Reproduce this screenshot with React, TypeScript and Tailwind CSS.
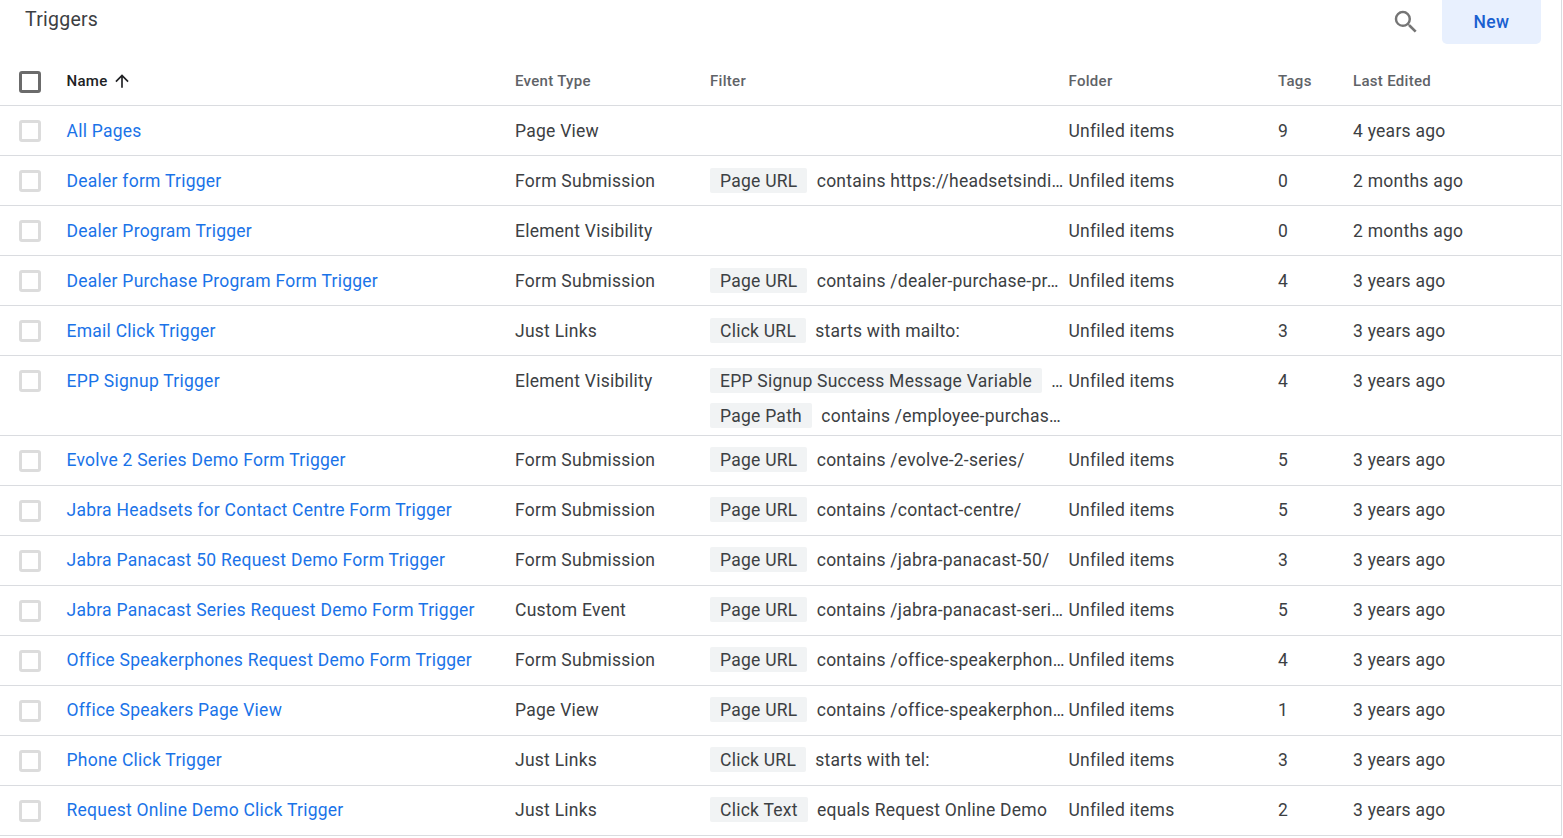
const rows = [
  { name: "All Pages", type: "Page View", filters: [], tags: "9", edited: "4 years ago" },
  { name: "Dealer form Trigger", type: "Form Submission", filters: [["Page URL", "contains https://headsetsindi…"]], tags: "0", edited: "2 months ago" },
  { name: "Dealer Program Trigger", type: "Element Visibility", filters: [], tags: "0", edited: "2 months ago" },
  { name: "Dealer Purchase Program Form Trigger", type: "Form Submission", filters: [["Page URL", "contains /dealer-purchase-pr…"]], tags: "4", edited: "3 years ago" },
  { name: "Email Click Trigger", type: "Just Links", filters: [["Click URL", "starts with mailto:"]], tags: "3", edited: "3 years ago" },
  { name: "EPP Signup Trigger", type: "Element Visibility", filters: [["EPP Signup Success Message Variable", "…"], ["Page Path", "contains /employee-purchas…"]], tags: "4", edited: "3 years ago" },
  { name: "Evolve 2 Series Demo Form Trigger", type: "Form Submission", filters: [["Page URL", "contains /evolve-2-series/"]], tags: "5", edited: "3 years ago" },
  { name: "Jabra Headsets for Contact Centre Form Trigger", type: "Form Submission", filters: [["Page URL", "contains /contact-centre/"]], tags: "5", edited: "3 years ago" },
  { name: "Jabra Panacast 50 Request Demo Form Trigger", type: "Form Submission", filters: [["Page URL", "contains /jabra-panacast-50/"]], tags: "3", edited: "3 years ago" },
  { name: "Jabra Panacast Series Request Demo Form Trigger", type: "Custom Event", filters: [["Page URL", "contains /jabra-panacast-seri…"]], tags: "5", edited: "3 years ago" },
  { name: "Office Speakerphones Request Demo Form Trigger", type: "Form Submission", filters: [["Page URL", "contains /office-speakerphon…"]], tags: "4", edited: "3 years ago" },
  { name: "Office Speakers Page View", type: "Page View", filters: [["Page URL", "contains /office-speakerphon…"]], tags: "1", edited: "3 years ago" },
  { name: "Phone Click Trigger", type: "Just Links", filters: [["Click URL", "starts with tel:"]], tags: "3", edited: "3 years ago" },
  { name: "Request Online Demo Click Trigger", type: "Just Links", filters: [["Click Text", "equals Request Online Demo"]], tags: "2", edited: "3 years ago" },
];

export default function App() {
  return (
    <div className="w-[1563px] h-[838px] overflow-hidden bg-white font-['Roboto',sans-serif] text-[17.5px] tracking-[0.25px] text-[#3c4043]">
      <div className="w-[1562px] border-r border-[#dadce0]">
        <div className="h-[44px] flex items-start justify-between pl-[25px] pr-[20px]">
          <h1 className="text-[19.5px] leading-[40px] text-[#3c4043]">Triggers</h1>
          <div className="flex items-center">
            <svg className="w-[30px] h-[30px] mr-[21px] mt-[-1px] text-[#757575]" viewBox="0 0 24 24" fill="currentColor">
              <path d="M15.5 14h-.79l-.28-.27A6.47 6.47 0 0 0 16 9.5 6.5 6.5 0 1 0 9.5 16c1.61 0 3.09-.59 4.23-1.57l.27.28v.79l5 4.99L20.49 19l-4.99-5zm-6 0C7.01 14 5 11.99 5 9.5S7.01 5 9.5 5 14 7.01 14 9.5 11.99 14 9.5 14z" />
            </svg>
            <button className="w-[99px] h-[44px] rounded-b-[5px] bg-[#e8f0fe] text-[#1a5fd0] text-[17.5px] tracking-[0.45px] font-medium">New</button>
          </div>
        </div>
        <div className="h-[62px] pt-[14px] flex items-center border-b border-[#dadce0] text-[15px] font-medium text-[#5f6368] tracking-[0.3px]">
          <div className="w-[66.5px] pl-[19px] shrink-0">
            <div className="w-[22px] h-[22px] rounded-[3px] border-[3px] border-[#6b6b6b] mt-[1px]" />
          </div>
          <div className="w-[448.5px] shrink-0 flex items-center text-[#202124]">
            Name
            <svg className="w-[20px] h-[20px] ml-[4px] mt-[-1px] text-[#202124]" viewBox="0 0 24 24" fill="currentColor">
              <path d="M4 12l1.41 1.41L11 7.83V20h2V7.83l5.58 5.59L20 12l-8-8-8 8z" />
            </svg>
          </div>
          <div className="w-[195px] shrink-0">Event Type</div>
          <div className="w-[358px] shrink-0">Filter</div>
          <div className="w-[210px] shrink-0 pl-[0.5px]">Folder</div>
          <div className="w-[75px] shrink-0">Tags</div>
          <div>Last Edited</div>
        </div>
        {rows.map((row, i) => {
          // rows below the two-line filter sit a pixel higher in the reference
          const top = i > 5 ? "pt-[13px]" : "pt-[14px]";
          return (
            <div key={row.name} className="flex items-start border-b border-[#dadce0] leading-[22px]">
              <div className="w-[66.5px] shrink-0 pl-[19px] pt-[14px]">
                <div className="w-[22px] h-[22px] rounded-[3px] border-[3px] border-[#dcdcdc]" />
              </div>
              <a className={`w-[448.5px] shrink-0 h-[49px] text-[#1a73e8] ${top}`}>{row.name}</a>
              <div className={`w-[195px] shrink-0 ${top}`}>{row.type}</div>
              <div className={`w-[358.5px] shrink-0 pb-[7px] flex flex-col gap-[10px] min-h-[49px] ${i > 5 ? "pt-[11px]" : "pt-[12px]"}`}>
                {row.filters.map(([label, value]) => (
                  <div key={label} className="flex items-center h-[25px] min-w-0">
                    <span className="shrink-0 h-[25px] px-[10px] rounded-[2px] bg-[#f1f3f4] whitespace-nowrap leading-[26px]">{label}</span>
                    <span className="ml-[9.25px] whitespace-nowrap">{value}</span>
                  </div>
                ))}
              </div>
              <div className={`w-[209.5px] shrink-0 ${top}`}>Unfiled items</div>
              <div className={`w-[75px] shrink-0 ${top}`}>{row.tags}</div>
              <div className={top}>{row.edited}</div>
            </div>
          );
        })}
      </div>
    </div>
  );
}
